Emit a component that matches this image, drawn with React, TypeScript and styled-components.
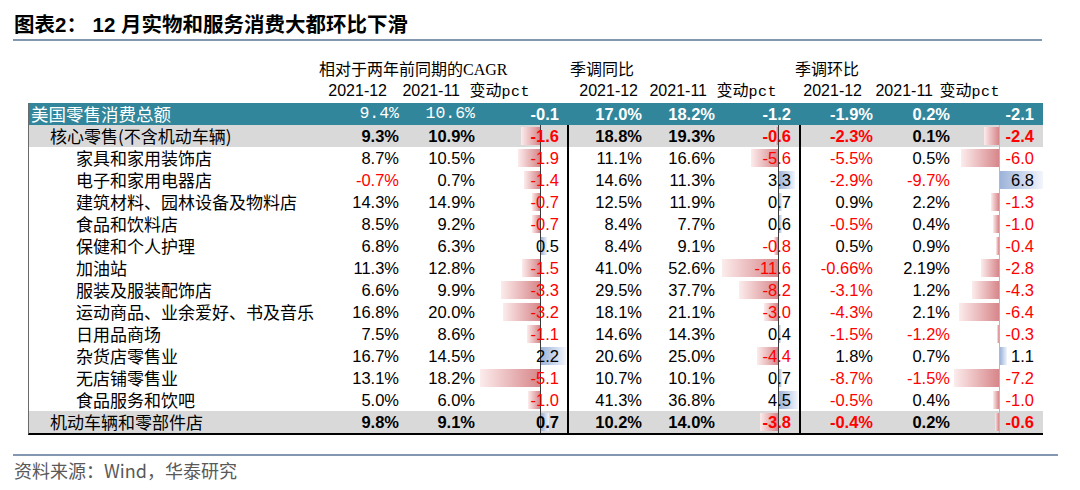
import React from "react";
import styled, { createGlobalStyle } from "styled-components";

const GlobalStyle = createGlobalStyle`
  html, body {
    margin: 0;
    padding: 0;
    background: #fff;
  }
  body {
    font-family: "Liberation Sans", "Noto Sans CJK SC", sans-serif;
    color: #000;
  }
`;

// column widths of the table body (x from 29 to 1043)
const COLS = "291px 84px 76px 87px 80px 73px 79px 79px 77px 88px";
// the second caption row sits a little off the body columns
const HEAD_COLS = "291px 67px 73px 70px 108px 69px 70px 85px 71px 67px";

type Kind = "total" | "group" | "item";

type Row = {
  label: string;
  kind: Kind;
  v: [string, string, number, string, string, number, string, string, number];
};

const rows: Row[] = [
  { label: "美国零售消费总额", kind: "total", v: ["9.4%", "10.6%", -0.1, "17.0%", "18.2%", -1.2, "-1.9%", "0.2%", -2.1] },
  { label: "核心零售(不含机动车辆)", kind: "group", v: ["9.3%", "10.9%", -1.6, "18.8%", "19.3%", -0.6, "-2.3%", "0.1%", -2.4] },
  { label: "家具和家用装饰店", kind: "item", v: ["8.7%", "10.5%", -1.9, "11.1%", "16.6%", -5.6, "-5.5%", "0.5%", -6.0] },
  { label: "电子和家用电器店", kind: "item", v: ["-0.7%", "0.7%", -1.4, "14.6%", "11.3%", 3.3, "-2.9%", "-9.7%", 6.8] },
  { label: "建筑材料、园林设备及物料店", kind: "item", v: ["14.3%", "14.9%", -0.7, "12.5%", "11.9%", 0.7, "0.9%", "2.2%", -1.3] },
  { label: "食品和饮料店", kind: "item", v: ["8.5%", "9.2%", -0.7, "8.4%", "7.7%", 0.6, "-0.5%", "0.4%", -1.0] },
  { label: "保健和个人护理", kind: "item", v: ["6.8%", "6.3%", 0.5, "8.4%", "9.1%", -0.8, "0.5%", "0.9%", -0.4] },
  { label: "加油站", kind: "item", v: ["11.3%", "12.8%", -1.5, "41.0%", "52.6%", -11.6, "-0.66%", "2.19%", -2.8] },
  { label: "服装及服装配饰店", kind: "item", v: ["6.6%", "9.9%", -3.3, "29.5%", "37.7%", -8.2, "-3.1%", "1.2%", -4.3] },
  { label: "运动商品、业余爱好、书及音乐", kind: "item", v: ["16.8%", "20.0%", -3.2, "18.1%", "21.1%", -3.0, "-4.3%", "2.1%", -6.4] },
  { label: "日用品商场", kind: "item", v: ["7.5%", "8.6%", -1.1, "14.6%", "14.3%", 0.4, "-1.5%", "-1.2%", -0.3] },
  { label: "杂货店零售业", kind: "item", v: ["16.7%", "14.5%", 2.2, "20.6%", "25.0%", -4.4, "1.8%", "0.7%", 1.1] },
  { label: "无店铺零售业", kind: "item", v: ["13.1%", "18.2%", -5.1, "10.7%", "10.1%", 0.7, "-8.7%", "-1.5%", -7.2] },
  { label: "食品服务和饮吧", kind: "item", v: ["5.0%", "6.0%", -1.0, "41.3%", "36.8%", 4.5, "-0.5%", "0.4%", -1.0] },
  { label: "机动车辆和零部件店", kind: "group", v: ["9.8%", "9.1%", 0.7, "10.2%", "14.0%", -3.8, "-0.4%", "0.2%", -0.6] },
];

// data bar settings for the three 变动pct columns
const bars = {
  2: { axis: 60, scale: 11.7, maxNeg: 60, maxPos: 25, axisColor: "#3a3a3a", pad: 8 },
  5: { axis: 58, scale: 4.8, maxNeg: 57, maxPos: 19, axisColor: "#3a3a3a", pad: 8 },
  8: { axis: 44, scale: 6.3, maxNeg: 45, maxPos: 43, axisColor: "#b8b8b8", pad: 9 },
} as const;

const Page = styled.div`
  width: 1080px;
  height: 490px;
  overflow: hidden;
`;

const Title = styled.h1`
  margin: 0 0 0 13px;
  width: 1029px;
  padding: 13px 0 2px 1px;
  box-sizing: border-box;
  height: 41px;
  line-height: 24px;
  font-family: "Liberation Sans", "Noto Sans CJK SC", sans-serif;
  font-size: 20.5px;
  font-weight: bold;
  color: #000;
  border-bottom: 2px solid #8497b0;
`;

const CaptionTop = styled.div`
  display: grid;
  grid-template-columns: 290px 251px 225px 1fr;
  margin: 19px 0 0 29px;
  height: 21px;
  line-height: 20px;
  font-family: "Liberation Serif", "Noto Sans CJK SC", serif;
  font-size: 16px;
  color: #000;
`;

const CaptionCols = styled.div`
  display: grid;
  grid-template-columns: ${HEAD_COLS};
  margin-left: 29px;
  height: 22px;
  line-height: 20px;
  font-size: 16px;
`;

const HeadCell = styled.div`
  text-align: right;
  white-space: nowrap;
`;

const Pct = styled.span`
  font-family: "Liberation Mono", monospace;
  font-size: 15px;
  letter-spacing: 0.5px;
`;

const Table = styled.div`
  margin-left: 28px;
  width: 1014px;
  border-left: 1px solid #6a6a6a;
  border-bottom: 2px solid #000;
`;

const TableRow = styled.div<{ $kind: Kind }>`
  display: grid;
  grid-template-columns: ${COLS};
  height: 22px;
  line-height: 22px;
  background: ${(p) =>
    p.$kind === "total" ? "#31869b" : p.$kind === "group" ? "#d9d9d9" : "#fff"};
  color: ${(p) => (p.$kind === "total" ? "#fff" : "#000")};
  font-weight: ${(p) => (p.$kind === "group" ? "bold" : "normal")};
  font-size: 16.5px;
`;

const Label = styled.div<{ $kind: Kind }>`
  padding-left: ${(p) => (p.$kind === "total" ? 2 : p.$kind === "group" ? 21 : 47)}px;
  font-family: "Noto Sans CJK SC", sans-serif;
  font-size: ${(p) => (p.$kind === "total" ? 17.5 : 17)}px;
  font-weight: normal;
  white-space: nowrap;
`;

const NumCell = styled.div<{ $neg: boolean; $kind: Kind; $pad: number; $rule?: boolean; $mono?: boolean }>`
  text-align: right;
  padding-right: ${(p) => p.$pad}px;
  box-sizing: border-box;
  white-space: nowrap;
  color: ${(p) => (p.$kind === "total" ? "#fff" : p.$neg ? "#ff0000" : "#000")};
  font-family: ${(p) => (p.$mono ? `"Liberation Mono", monospace` : `"Liberation Sans", sans-serif`)};
  font-size: 16.5px;
  font-weight: ${(p) => (p.$kind === "item" || p.$mono ? "normal" : "bold")};
  border-left: ${(p) => (p.$rule && p.$kind !== "total" ? "2px solid #000" : "none")};
`;

const DeltaCell = styled(NumCell)`
  position: relative;
`;

const Bar = styled.span<{ $neg: boolean }>`
  position: absolute;
  top: 2px;
  bottom: 2px;
  background: ${(p) =>
    p.$neg
      ? "linear-gradient(to right, #fcecec, #d7868a)"
      : "linear-gradient(to right, #9cb3d9, #f2f5fb)"};
`;

const Axis = styled.span<{ $color: string }>`
  position: absolute;
  top: 0;
  bottom: 0;
  width: 1px;
  background: ${(p) => p.$color};
`;

const Value = styled.span`
  position: relative;
`;

const SourceRule = styled.div`
  margin: 19px 0 0 13px;
  width: 1045px;
  border-top: 2px solid #8497b0;
`;

const Source = styled.div`
  margin: 3px 0 0 14px;
  line-height: 22px;
  font-family: "Noto Sans CJK SC", sans-serif;
  font-size: 18px;
  color: #595959;
`;

function Delta({ value, col, kind }: { value: number; col: 2 | 5 | 8; kind: Kind }) {
  const b = bars[col];
  const neg = value < 0;
  const w = Math.min(Math.abs(value) * b.scale, neg ? b.maxNeg : b.maxPos);
  const showBar = kind !== "total";
  return (
    <DeltaCell $neg={neg} $kind={kind} $pad={b.pad}>
      {showBar && (
        <Bar $neg={neg} style={{ left: neg ? b.axis - w : b.axis + 1, width: w }} />
      )}
      {showBar && <Axis $color={b.axisColor} style={{ left: b.axis }} />}
      <Value>{value.toFixed(1)}</Value>
    </DeltaCell>
  );
}

export default function App() {
  return (
    <Page>
      <GlobalStyle />
      <Title>图表2： 12 月实物和服务消费大都环比下滑</Title>

      <CaptionTop>
        <div />
        <div>相对于两年前同期的CAGR</div>
        <div>季调同比</div>
        <div>季调环比</div>
      </CaptionTop>
      <CaptionCols>
        <div />
        {[0, 1, 2].map((g) => (
          <React.Fragment key={g}>
            <HeadCell>2021-12</HeadCell>
            <HeadCell>2021-11</HeadCell>
            <HeadCell>
              变动<Pct>pct</Pct>
            </HeadCell>
          </React.Fragment>
        ))}
      </CaptionCols>

      <Table>
        {rows.map((r) => {
          const mono = r.kind === "total";
          return (
            <TableRow key={r.label} $kind={r.kind}>
              <Label $kind={r.kind}>{r.label}</Label>
              <NumCell $neg={r.v[0].startsWith("-")} $kind={r.kind} $pad={5} $mono={mono}>
                {r.v[0]}
              </NumCell>
              <NumCell $neg={r.v[1].startsWith("-")} $kind={r.kind} $pad={5} $mono={mono}>
                {r.v[1]}
              </NumCell>
              <Delta value={r.v[2]} col={2} kind={r.kind} />
              <NumCell $neg={r.v[3].startsWith("-")} $kind={r.kind} $pad={5} $rule>
                {r.v[3]}
              </NumCell>
              <NumCell $neg={r.v[4].startsWith("-")} $kind={r.kind} $pad={5}>
                {r.v[4]}
              </NumCell>
              <Delta value={r.v[5]} col={5} kind={r.kind} />
              <NumCell $neg={r.v[6].startsWith("-")} $kind={r.kind} $pad={5} $rule>
                {r.v[6]}
              </NumCell>
              <NumCell $neg={r.v[7].startsWith("-")} $kind={r.kind} $pad={5}>
                {r.v[7]}
              </NumCell>
              <Delta value={r.v[8]} col={8} kind={r.kind} />
            </TableRow>
          );
        })}
      </Table>

      <SourceRule />
      <Source>资料来源：Wind，华泰研究</Source>
    </Page>
  );
}
